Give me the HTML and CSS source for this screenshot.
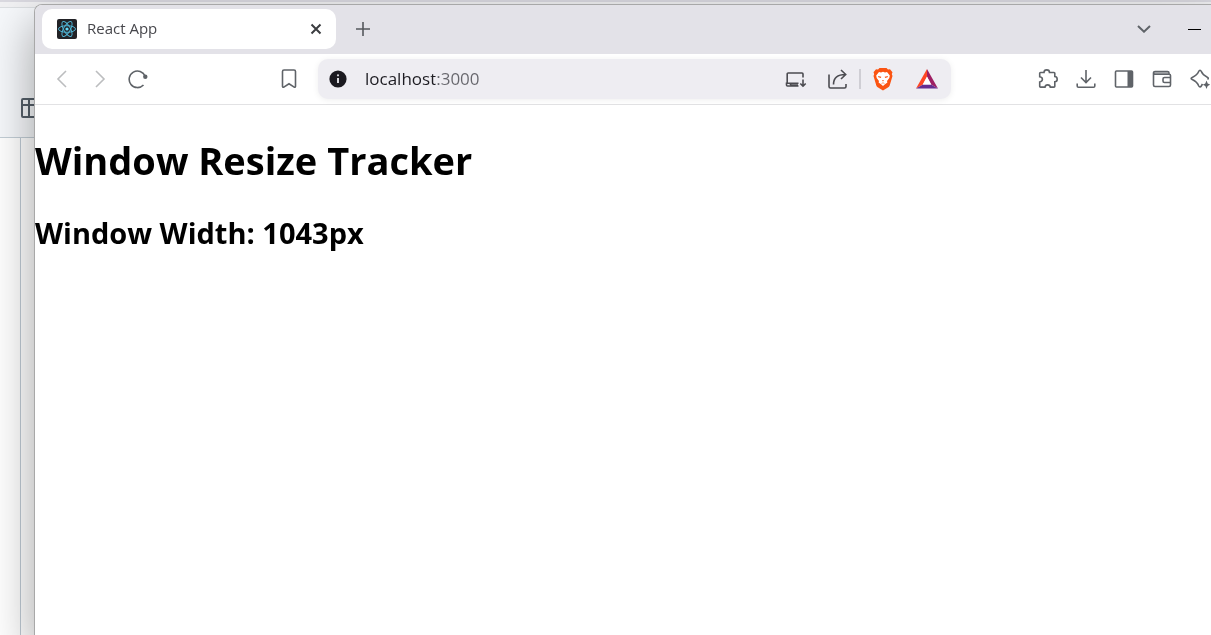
FILE: index.html
```html
<!DOCTYPE html>
<html lang="en">
<head>
<meta charset="utf-8">
<title>React App</title>
<link rel="stylesheet" href="styles.css">
</head>
<body>
<div class="backdrop">
  <div class="backdrop-tabs"></div>
  <div class="backdrop-header">
    <svg class="table-icon" width="22" height="20" viewBox="0 0 22 20"><path d="M1 2a1 1 0 0 1 1-1H22M1 2v16a1 1 0 0 0 1 1H22M1 7H22M8 1V19"/></svg>
  </div>
  <div class="backdrop-body"></div>
</div>
<div class="window">
  <header class="tab-strip">
    <div class="tab">
      <svg class="favicon" width="20" height="20" viewBox="0 0 20 20">
        <rect width="20" height="20" rx="2" fill="#222226"/>
        <g fill="none" stroke="#4fb3d3"><ellipse cx="10" cy="10" rx="8.5" ry="3.3"/><ellipse cx="10" cy="10" rx="8.5" ry="3.3" transform="rotate(60 10 10)"/><ellipse cx="10" cy="10" rx="8.5" ry="3.3" transform="rotate(120 10 10)"/></g>
        <circle cx="10" cy="10" r="1.6" fill="#61dafb"/>
      </svg>
      <span class="tab-title">React App</span>
      <button class="close" aria-label="Close tab"><svg width="12" height="12" viewBox="0 0 12 12"><path d="M1.5 1.5 10.5 10.5M10.5 1.5 1.5 10.5"/></svg></button>
    </div>
    <button class="new-tab" aria-label="New tab"><svg width="14" height="14" viewBox="0 0 14 14"><path d="M7 0V14M0 7H14"/></svg></button>
    <div class="window-controls">
      <button class="search-tabs" aria-label="Search tabs"><svg width="14" height="8" viewBox="0 0 14 8"><path d="M1 1 7 6.7 13 1"/></svg></button>
      <button class="minimise" aria-label="Minimise"><svg width="13" height="1" viewBox="0 0 13 1"><path d="M0 .5H13"/></svg></button>
    </div>
  </header>
  <nav class="toolbar">
    <div class="group">
      <button class="tool faded" aria-label="Back"><svg width="20" height="20" viewBox="0 0 20 20"><path d="M14 2 6 10l8 8"/></svg></button>
      <button class="tool faded" aria-label="Forward"><svg width="20" height="20" viewBox="0 0 20 20"><path d="M6 2l8 8-8 8"/></svg></button>
      <button class="tool" aria-label="Reload"><svg width="20" height="20" viewBox="0 0 20 20"><path d="M17.2 7.2A8.300 8.300 0 1 0 15.500 16"/><circle class="solid" cx="17.300" cy="7.800" r="2.200"/></svg></button>
    </div>
    <button class="tool bookmark" aria-label="Bookmark"><svg width="20" height="20" viewBox="0 0 20 20"><path d="M5 1h10a1.500 1.500 0 0 1 1.500 1.500V17.500a.8.800 0 0 1-1.300.6L10 14.800 4.800 18.100a.8.800 0 0 1-1.300-.6V2.500A1.500 1.500 0 0 1 5 1Z"/></svg></button>
    <div class="address">
      <button class="info" aria-label="Site information"><svg width="18" height="18" viewBox="0 0 18 18"><circle cx="9" cy="9" r="8.600" fill="#1b1a20"/><path d="M9 8v5" stroke="#d8d8dd"/><circle cx="9" cy="5.300" r="1.100" fill="#d8d8dd"/></svg></button>
      <input class="url" type="text" aria-label="Address" value="localhost:3000">
      <button class="action" aria-label="Install"><svg width="22" height="20" viewBox="0 0 22 20"><path d="M13.500 17H2.500a1 1 0 0 1-1-1v-1.700h12M2.200 14V5a1 1 0 0 1 1-1h13.800a1 1 0 0 1 1 1v3.500M18 10.500v6.500M15.300 14.500l2.700 2.700 2.700-2.700M5 14.500l1 1.500h7"/></svg></button>
      <button class="action" aria-label="Share"><svg width="22" height="20" viewBox="0 0 22 20"><path d="M2 5.500V17.500a1.500 1.500 0 0 0 1.500 1.500h14A1.500 1.500 0 0 0 19 17.500v-2.500M6.500 15.500C6.500 9 10 5.500 18.500 5.500M14 1l4.700 4.500L14 10"/></svg></button>
      <span class="separator"></span>
      <button class="action brand" aria-label="Brave Shields"><svg width="22" height="24" viewBox="0 0 22 24">
        <path d="M6 2.500 7.500 1h7L16 2.500l2-.2 2.500 3-.7 1.600.7 2-2.800 9.500c-.3 1-1 1.700-1.800 2.200L11 23.500 6.100 20.600c-.8-.5-1.500-1.200-1.800-2.200L1.500 8.900l.7-2-.7-1.600 2.500-3Z" fill="#fb5412"/>
        <path d="M7 5 9 5.400l2-.6 2 .6L15 5l2.800 3.500-.5 2.500-2.300 3 .4 1.500-2.400 1.700L11 19l-2-1.800-2.400-1.700L7 14l-2.300-3-.5-2.500Z" fill="#fff"/>
        <path d="M6 9l3.300.8-.4 1.200-2.500-.8ZM16 9l-3.300.8.4 1.200 2.500-.8ZM9.800 13.200h2.400L11 14.500ZM8.800 16.500l2.200-1 2.200 1-2.200-.2Z" fill="#fb5412"/>
      </svg></button>
      <button class="action brand" aria-label="Brave Rewards"><svg width="22" height="20" viewBox="0 0 22 20"><path d="M11 0 0 19.500 7 15.500 11 8Z" fill="#ff4724"/><path d="M11 0 22 19.500l-7-4L11 8Z" fill="#9e1f63"/><path d="M0 19.500H22L15 15.500H7Z" fill="#662d91"/><path d="M11 7.500 15.300 15.500H6.700Z" fill="#fff"/></svg></button>
    </div>
    <div class="group">
      <button class="tool" aria-label="Extensions"><svg width="20" height="20" viewBox="0 0 20 20"><path d="M2.500 3.500H6C6 0 11.500 0 11.500 3.500h4.500a.8.800 0 0 1 .8.800V7.500C20 7.800 20 12.500 16.800 12.800v4.500a.8.800 0 0 1-.8.800H12.300c-.3-3-5-3-5.300 0H2.500a.8.800 0 0 1-.8-.8V13c3.600-.5 3.600-4.800 0-5.300V4.300a.8.800 0 0 1 .8-.8Z"/></svg></button>
      <button class="tool" aria-label="Downloads"><svg width="20" height="20" viewBox="0 0 20 20"><path d="M10 1v12M5 8.500 10 13.500l5-5M1.200 14.500V17a1.300 1.300 0 0 0 1.300 1.300h15a1.300 1.300 0 0 0 1.300-1.300v-2.500"/></svg></button>
      <button class="tool" aria-label="Sidebar"><svg width="20" height="20" viewBox="0 0 20 20"><rect x="1.500" y="2" width="17" height="16" rx="1"/><path class="solid" d="M13.500 2h5v16h-5Z"/></svg></button>
      <button class="tool" aria-label="Wallet"><svg width="20" height="20" viewBox="0 0 20 20"><path class="tint" d="M2 2.500h14V5H2Z"/><path d="M1.500 4A1.500 1.500 0 0 1 3 2.500h12.500A1.500 1.500 0 0 1 17 4v1M1.500 4v12A1.500 1.500 0 0 0 3 17.500h14a1.500 1.500 0 0 0 1.500-1.500V6.500A1.300 1.300 0 0 0 17.200 5.200H3A1.500 1.500 0 0 1 1.500 4M18.500 8.500h-6a1.500 1.500 0 0 0-1.500 1.500v2a1.500 1.500 0 0 0 1.500 1.500h6"/></svg></button>
      <button class="tool" aria-label="Leo AI"><svg width="20" height="20" viewBox="0 0 20 20"><path d="M12.500 15 11.300 17c-.7 1.200-1.900 1.200-2.500 0C7.800 14.500 7 12.800 2.200 10.600c-1.400-.6-1.400-1.600 0-2.200C6.500 6.500 7.500 5.500 8.800 2.300c.6-1.400 1.800-1.400 2.400 0C12.500 5.500 13.500 6.500 17.300 8.200c1.300.6 1.300 1.600.2 2.200"/><path class="solid" d="M16.500 11.500l1.200 3 2.600 1.200-2.600 1.200-1.200 3-1.200-3-2.600-1.200 2.600-1.200Z"/></svg></button>
    </div>
  </nav>
  <main class="page">
    <h1>Window Resize Tracker</h1>
    <h2>Window Width: 1043px</h2>
  </main>
</div>
</body>
</html>
```

FILE: styles.css
```css
* { box-sizing: border-box; }
body {
  margin: 0;
  height: 100vh;
  overflow: hidden;
  font-family: "Open Sans", "Noto Sans", sans-serif;
  background: #fff;
}
button {
  display: flex;
  align-items: center;
  justify-content: center;
  padding: 0;
  border: 0;
  background: none;
}
svg {
  display: block;
  flex: none;
  fill: none;
  stroke: none;
}
.backdrop {
  position: fixed;
  inset: 0;
  display: flex;
  flex-direction: column;
}
.backdrop-tabs {
  height: 8px;
  border-bottom: 1px solid #dcdfe2;
  background: linear-gradient(#dad9e0 2px, #f1f1f3 2px);
}
.backdrop-header {
  height: 130px;
  padding: 90px 0 0 21px;
  border-bottom: 1px solid #c3ced6;
  background: #f6f8fb;
}
.table-icon path { stroke: #56606a; stroke-width: 2; }
.backdrop-body {
  flex: 1;
  width: 21px;
  border-right: 1px solid #bfcad4;
}
.window {
  position: relative;
  display: flex;
  flex-direction: column;
  height: 100%;
  margin: 4px -8px 0 34px;
  border: solid #a8a8a8;
  border-width: 1px 0 0 1px;
  border-radius: 8px 0 0 0;
  background: #fff;
  overflow: hidden;
  box-shadow: 0 18px 48px rgba(0, 0, 0, 0.36);
}
.tab-strip {
  display: flex;
  height: 49px;
  padding: 4px 0 0 7px;
  background: #e3e2e8;
}
.tab {
  display: flex;
  align-items: center;
  gap: 10px;
  width: 294px;
  height: 40px;
  padding: 0 10px 0 15px;
  border-radius: 10px;
  background: #fff;
}
.tab-title {
  flex: 1;
  font-size: 15px;
  line-height: 20px;
  padding-bottom: 2px;
  color: #47474c;
}
.close { width: 20px; height: 20px; }
.close path { stroke: #3b3d40; stroke-width: 2; }
.new-tab { width: 54px; height: 40px; }
.new-tab path { stroke: #55585c; stroke-width: 1.6; }
.window-controls { display: flex; margin-left: auto; }
.window-controls button { width: 50px; height: 40px; }
.search-tabs path { stroke: #5f6368; stroke-width: 2; }
.minimise path { stroke: #000; }
.toolbar {
  display: flex;
  align-items: center;
  height: 51px;
  padding-left: 8px;
  border-bottom: 1px solid #e2e2e4;
}
.group { display: flex; }
.tool { width: 38px; height: 38px; }
.tool svg { stroke: #5f6368; stroke-width: 1.6; }
.tool .solid { fill: #5f6368; stroke: none; }
.tool .tint { fill: #b4b6b9; stroke: none; }
.faded svg { stroke: #bcbdbf; }
.bookmark { margin-left: 113px; }
.address {
  display: flex;
  align-items: center;
  flex: 1;
  height: 40px;
  margin: 0 78px 0 10px;
  padding: 0 2px 0 11px;
  border-radius: 10px;
  background: #eeedf2;
  box-shadow: 0 1px 6px rgba(0, 0, 0, 0.07);
}
.info path { stroke-width: 2; }
.url {
  flex: 1;
  min-width: 0;
  height: 32px;
  margin-left: 18px;
  padding: 0 0 2px;
  border: 0;
  outline: 0;
  font-family: inherit;
  font-size: 17px;
  background: linear-gradient(90deg, #1d1c22 70px, #66666c 70px);
  -webkit-background-clip: text;
  background-clip: text;
  -webkit-text-fill-color: transparent;
}
.action { width: 42px; height: 38px; }
.action svg { stroke: #4b4b50; stroke-width: 1.6; }
.separator { width: 2px; height: 20px; background: #cfced4; }
.action.brand svg { stroke: none; }
.brand { width: 44px; }
.page { flex: 1; }
h1, h2 { margin: 0; color: #000; }
h1 { padding-top: 28px; font-size: 38px; line-height: 54px; }
h2 { padding-top: 26px; font-size: 29px; line-height: 40px; }
```
